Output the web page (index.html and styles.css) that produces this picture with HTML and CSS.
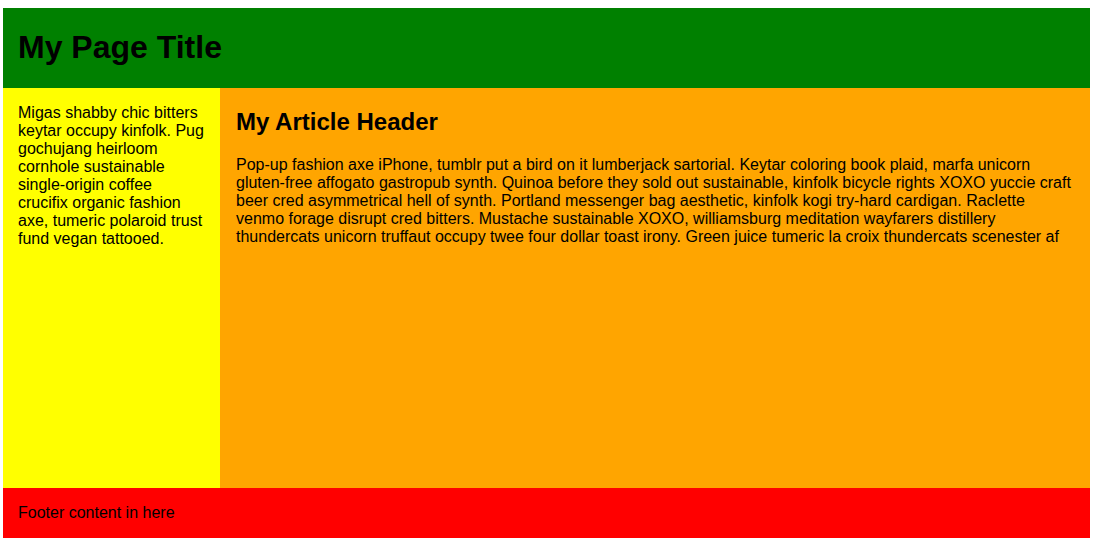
FILE: index.html
```html
<!DOCTYPE html>
<html>
<head>
<meta charset="utf-8">
<link rel="stylesheet" href="styles.css">
</head>
<body>
<div class="page">
  <header class="header"><h1 class="title">My Page Title</h1></header>
  <aside class="sidebar">Migas shabby chic bitters keytar occupy kinfolk. Pug gochujang heirloom cornhole sustainable single-origin coffee crucifix organic fashion axe, tumeric polaroid trust fund vegan tattooed.</aside>
  <main class="main">
    <h2 class="article-title">My Article Header</h2>
    <p class="article-text">Pop-up fashion axe iPhone, tumblr put a bird on it lumberjack sartorial. Keytar coloring book plaid, marfa unicorn gluten-free affogato gastropub synth. Quinoa before they sold out sustainable, kinfolk bicycle rights XOXO yuccie craft beer cred asymmetrical hell of synth. Portland messenger bag aesthetic, kinfolk kogi try-hard cardigan. Raclette venmo forage disrupt cred bitters. Mustache sustainable XOXO, williamsburg meditation wayfarers distillery thundercats unicorn truffaut occupy twee four dollar toast irony. Green juice tumeric la croix thundercats scenester af</p>
  </main>
  <footer class="footer">Footer content in here</footer>
</div>
</body>
</html>
```
FILE: styles.css
```css
html, body {
  background: #ffffff;
}
body {
  margin: 8px 6px 8px 3px;
  font-family: "Liberation Sans", Arial, sans-serif;
  font-size: 16px;
  line-height: 18px;
  color: #000;
}
.page {
  display: grid;
  grid-template-columns: 217px 1fr;
  grid-template-rows: 80px 400px 50px;
}
.header {
  grid-column: 1 / 3;
  background: #008000;
  display: flex;
  align-items: center;
  padding: 0 0 2px 15px;
}
.title {
  margin: 0;
  font-size: 32px;
  line-height: 37px;
  font-weight: bold;
}
.sidebar {
  background: #ffff00;
  padding: 16px 15px 15px 15px;
}
.main {
  background: #ffa500;
  padding: 20px 16px;
}
.article-title {
  margin: 0 0 20px 0;
  font-size: 24px;
  line-height: 28px;
  font-weight: bold;
}
.article-text {
  margin: 0;
}
.footer {
  grid-column: 1 / 3;
  background: #ff0000;
  display: flex;
  align-items: center;
  padding-left: 15px;
}
```
